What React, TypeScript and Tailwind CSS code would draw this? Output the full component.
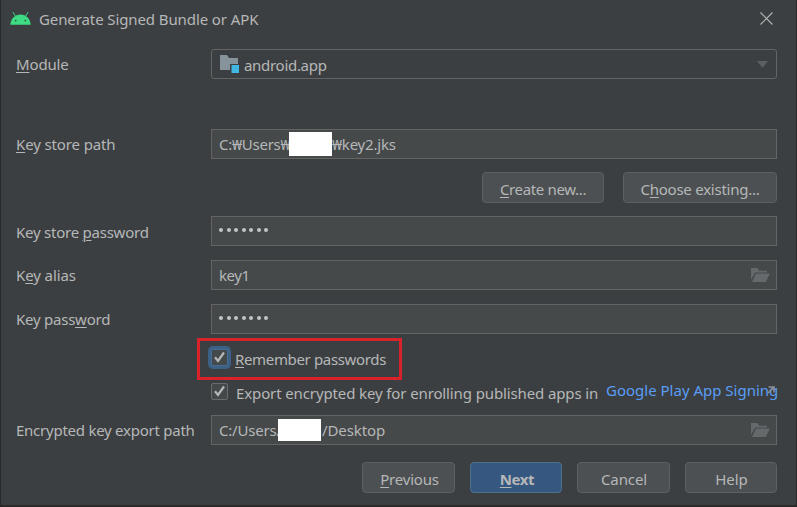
import type { ReactNode } from 'react';

function U({ children }: { children: ReactNode }) {
  return <span className="underline decoration-1 underline-offset-2">{children}</span>;
}

function Row({ label, className = '', labelClass = '', children }: { label: ReactNode; className?: string; labelClass?: string; children: ReactNode }) {
  return (
    <div className={`flex h-[30px] items-center ${className}`}>
      <div className={`w-[195px] shrink-0 ${labelClass}`}>{label}</div>
      {children}
    </div>
  );
}

function Field({ children, folder = false }: { children: ReactNode; folder?: boolean }) {
  return (
    <div className="flex h-[30px] w-[566px] items-center border border-[#646464] bg-[#45494a] pl-[7px] pr-[6px]">
      {children}
      {folder && <FolderIcon />}
    </div>
  );
}

function FolderIcon() {
  return (
    <svg className="ml-auto" width="19" height="14" viewBox="0 0 19 14" fill="#64696c">
      <path d="M0 11.8V0h6.5l1.7 2.8H16v1.7H4.2z" />
      <path d="M5 5.5h14L14.8 14H1z" />
    </svg>
  );
}

function Dots() {
  return (
    <div className="mb-[2px] flex gap-[3.5px]">
      {[0, 1, 2, 3, 4, 5, 6].map((i) => (
        <span key={i} className="size-[4px] rounded-full bg-[#c4c4c4]" />
      ))}
    </div>
  );
}

function Button({ children, className = '', primary = false }: { children: ReactNode; className?: string; primary?: boolean }) {
  return (
    <button
      className={`flex h-[31px] justify-center rounded-[4px] border pt-[5px] ${
        primary ? 'border-[#4c708c] bg-[#365880] font-bold' : 'border-[#5e6060] bg-[#4c5052]'
      } ${className}`}
    >
      {children}
    </button>
  );
}

function Checkbox({ focused = false }: { focused?: boolean }) {
  return (
    <span
      className={`flex size-[17px] shrink-0 items-center justify-center rounded-[2px] border bg-[#43494a] ${
        focused ? 'border-[#466d94] shadow-[0_0_0_3px_#3d6185]' : 'border-[#6b6b6b]'
      }`}
    >
      <svg width="13" height="13" viewBox="0 0 13 13" fill="none" stroke="#b6b6b6" strokeWidth="2.2">
        <path d="M2 6.3 5 10 11 1.5" />
      </svg>
    </span>
  );
}

export default function App() {
  return (
    <div className="h-[507px] w-[797px] overflow-hidden border-x border-b-2 border-[#2a2a2b] bg-[#3c3f41] pl-[15px] font-['Noto_Sans',sans-serif] text-[15px] leading-[22px] whitespace-nowrap text-[#b6b7b8]">
      <header className="-ml-[6px] flex h-[49px] items-start pt-[8px]">
        <svg className="mt-[4px]" width="21" height="13" viewBox="0 0 21 13">
          <path d="M3.1.4 5.3 4M17.9.4 15.7 4" stroke="#3ddc84" strokeWidth="1" strokeLinecap="round" />
          <path d="M.3 12.8C.8 6.8 5 2.6 10.5 2.6s9.700 4.200 10.200 10.200z" fill="#3ddc84" />
          <circle cx="5.700" cy="8.600" r=".9" fill="#34583f" />
          <circle cx="15.300" cy="8.600" r=".9" fill="#34583f" />
        </svg>
        <h1 className="ml-[8px] tracking-[-0.1px]">Generate Signed Bundle or APK</h1>
        <svg className="ml-auto mr-[23px] mt-[4px]" width="13" height="13" viewBox="0 0 13 13" stroke="#b4b6b7" strokeWidth="1.100">
          <path d="M.5.5l12 12M12.500.5l-12 12" />
        </svg>
      </header>

      <Row labelClass="tracking-[-0.15px]" label={<><U>M</U>odule</>}>
        <div className="flex h-[30px] w-[566px] items-center rounded-[3px] border border-[#646464] pl-[8px] pr-[8px]">
          <svg width="20" height="18" viewBox="0 0 20 18">
            <path d="M0 0h7l2 3h9v12H0z" fill="#87939a" />
            <path d="M10 9h10v9H10z" fill="#3c3f41" />
            <path d="M11.500 10H19v8h-7.500z" fill="#40b6e0" />
          </svg>
          <span className="ml-[4px] mt-[2px] tracking-[-0.3px]">android.app</span>
          <svg className="ml-auto" width="11" height="7" viewBox="0 0 11 7">
            <path d="M0 0h11L5.500 7z" fill="#5c5e60" />
          </svg>
        </div>
      </Row>

      <Row className="mt-[50px]" labelClass="tracking-[-0.13px]" label={<><U>K</U>ey store path</>}>
        <Field>
          <span className="w-[70px] tracking-[-0.25px]">C:₩Users₩</span>
          <span className="relative h-[24px] w-[43px] bg-white" />
          <span className="tracking-[-0.2px]">₩key2.jks</span>
        </Field>
      </Row>

      <div className="mt-[13px] flex pl-[466px]">
        <Button className="w-[122px] tracking-[-0.35px]"><span><U>C</U>reate new...</span></Button>
        <Button className="ml-[19px] w-[154px] tracking-[-0.25px]"><span>C<U>h</U>oose existing...</span></Button>
      </div>

      <Row className="mt-[13px]" labelClass="tracking-[-0.24px] pt-[2px]" label={<>Key store <U>p</U>assword</>}>
        <Field><Dots /></Field>
      </Row>
      <Row className="mt-[14px]" labelClass="tracking-[-0.1px]" label={<>K<U>e</U>y alias</>}>
        <Field folder><span className="tracking-[-0.4px]">key1</span></Field>
      </Row>
      <Row className="mt-[14px]" labelClass="tracking-[-0.24px]" label={<>Key pass<U>w</U>ord</>}>
        <Field><Dots /></Field>
      </Row>

      <div className="ml-[181px] mt-[4px] flex h-[42px] w-[205px] items-start border-[3px] border-[#d9222a] pl-[11px] pt-[7px]">
        <div className="mt-px"><Checkbox focused /></div>
        <span className="ml-[7px] tracking-[-0.35px]"><U>R</U>emember passwords</span>
      </div>

      <div className="mt-[3px] flex h-[32px] items-start pl-[195px]">
        <Checkbox />
        <span className="ml-[8px] -mt-px w-[370px] tracking-[-0.12px]">Export encrypted key for enrolling published apps in</span>
        <span className="relative -mt-[4px] text-[#589df6]">
          Google Play App Signing
          <svg className="absolute right-[3px] top-[7px]" width="8" height="8" viewBox="0 0 8 8" fill="none" stroke="#8a9299" strokeWidth="1.500">
            <path d="M1.500 1H7v5.500M7 1 1 7" />
          </svg>
        </span>
      </div>

      <Row labelClass="tracking-[-0.25px]" label="Encrypted key export path">
        <Field folder>
          <span className="w-[59px] tracking-[-0.2px]">C:/Users/</span>
          <span className="relative -mt-px h-[22px] w-[43px] bg-white" />
          <span className="ml-px tracking-[-0.1px]">/Desktop</span>
        </Field>
      </Row>

      <footer className="mt-[17px] flex gap-[15px] pl-[346px]">
        <Button className="w-[93px] tracking-[-0.2px]"><span className="ml-[2px]"><U>P</U>revious</span></Button>
        <Button primary className="w-[92px] tracking-[-0.4px]"><span className="ml-[2px]"><U>N</U>ext</span></Button>
        <Button className="w-[93px]"><span className="ml-px tracking-[-0.1px]">Cancel</span></Button>
        <Button className="w-[92px]"><span className="ml-px">Help</span></Button>
      </footer>
    </div>
  );
}
